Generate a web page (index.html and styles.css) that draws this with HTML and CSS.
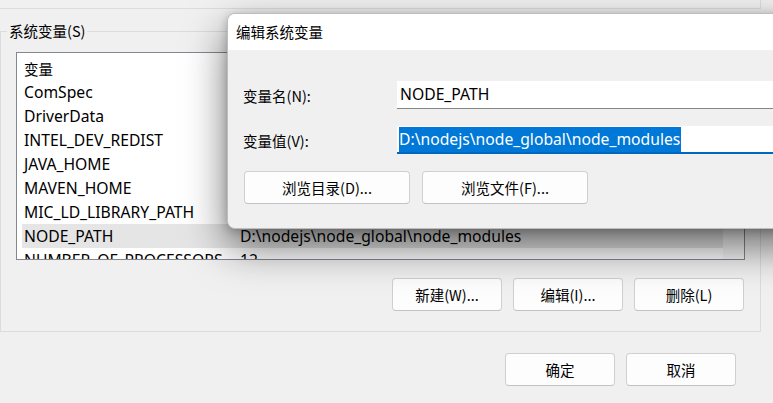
FILE: index.html
```html
<!DOCTYPE html>
<html lang="zh-CN">
<head>
<meta charset="utf-8">
<title>环境变量</title>
<link rel="stylesheet" href="styles.css">
</head>
<body>
<div class="window">
  <div class="user-group"></div>

  <fieldset class="group">
    <legend>系统变量(S)</legend>
    <div class="list">
      <div class="rows">
        <div class="row head"><span class="c1">变量</span><span class="c2">值</span></div>
        <div class="row"><span class="c1">ComSpec</span><span class="c2">C:\Windows\system32\cmd.exe</span></div>
        <div class="row"><span class="c1">DriverData</span><span class="c2">C:\Windows\System32\Drivers\DriverData</span></div>
        <div class="row"><span class="c1">INTEL_DEV_REDIST</span><span class="c2">C:\Program Files (x86)\Common Files\Intel\Shared Libraries\</span></div>
        <div class="row"><span class="c1">JAVA_HOME</span><span class="c2">C:\Program Files\Java\jdk1.8.0</span></div>
        <div class="row"><span class="c1">MAVEN_HOME</span><span class="c2">D:\maven</span></div>
        <div class="row"><span class="c1">MIC_LD_LIBRARY_PATH</span><span class="c2">%INTEL_DEV_REDIST%compiler\lib\mic</span></div>
        <div class="row sel"><span class="c1">NODE_PATH</span><span class="c2">D:\nodejs\node_global\node_modules</span></div>
        <div class="row"><span class="c1">NUMBER_OF_PROCESSORS</span><span class="c2">12</span></div>
      </div>
      <div class="scroll"></div>
    </div>
    <div class="btns">
      <button class="btn">新建(W)...</button>
      <button class="btn">编辑(I)...</button>
      <button class="btn">删除(L)</button>
    </div>
  </fieldset>

  <div class="footer">
    <button class="btn">确定</button>
    <button class="btn">取消</button>
  </div>

  <div class="dialog">
    <div class="title">编辑系统变量</div>
    <div class="body">
      <div class="field">
        <label class="lbl">变量名(N):</label>
        <div class="input">NODE_PATH</div>
      </div>
      <div class="field">
        <label class="lbl">变量值(V):</label>
        <div class="input focus"><span class="selected">D:\nodejs\node_global\node_modules</span></div>
      </div>
      <div class="dbtns">
        <button class="btn wide">浏览目录(D)...</button>
        <button class="btn wide">浏览文件(F)...</button>
      </div>
    </div>
  </div>
</div>
</body>
</html>
```

FILE: styles.css
```css
* { box-sizing: border-box; }

html, body {
  margin: 0;
  padding: 0;
  background: #f0f0f0;
  overflow: hidden;
}

body {
  width: 773px;
  height: 403px;
  font-family: "Noto Sans", "Noto Sans CJK SC", sans-serif;
  font-size: 15.7px;
  color: #000;
}

.window {
  position: relative;
  width: 773px;
  height: 403px;
}

.user-group {
  width: 761px;
  height: 9px;
  border-right: 1px solid #dcdcdc;
  border-bottom: 1px solid #dcdcdc;
}

.group {
  margin: 12px 0 0 0;
  width: 761px;
  height: 311px;
  border: 1px solid #dcdcdc;
  padding: 11px 15px 0 15px;
}

.group legend {
  margin-left: -9px;
  padding: 0 2px;
  line-height: 20px;
  font-family: "Noto Sans CJK SC", sans-serif;
  font-size: 14.5px;
}

.list {
  height: 208px;
  width: 729px;
  border: 1px solid #828790;
  background: #fff;
  display: flex;
  overflow: hidden;
}

.rows {
  flex: 1;
  padding: 3px 0 0 5px;
}

.row {
  height: 24px;
  display: flex;
  align-items: center;
  white-space: nowrap;
  overflow: hidden;
}

.row.sel { background: #e5e5e5; }

.row .c1 {
  width: 217px;
  padding-left: 2px;
  flex: none;
}

.row .c2 { padding-left: 1px; }

.row.head .c1 { font-family: "Noto Sans CJK SC", sans-serif; font-size: 14.5px; }

.scroll {
  width: 21px;
  flex: none;
  background: #f7f7f7;
}

.btn {
  font-family: "Noto Sans CJK SC", sans-serif;
  font-size: 14.5px;
  width: 110px;
  height: 33px;
  background: #fdfdfd;
  border: 1px solid #d0d0d0;
  border-bottom-color: #c2c2c2;
  border-radius: 4px;
  padding: 0;
  color: #000;
}

.btns {
  display: flex;
  justify-content: flex-end;
  gap: 11px;
  margin-top: 18px;
  padding-right: 1px;
}

.footer {
  display: flex;
  justify-content: flex-end;
  gap: 11px;
  margin-top: 21px;
  padding-right: 37px;
}

.dialog {
  position: absolute;
  left: 227px;
  top: 13px;
  width: 620px;
  height: 216px;
  border-radius: 8px;
  border: 1px solid #bdbdbd;
  background: #f0f0f0;
  overflow: hidden;
  box-shadow: 0 18px 42px rgba(0, 0, 0, 0.55), 0 2px 10px rgba(0, 0, 0, 0.22);
}

.title {
  height: 36px;
  background: #fff;
  padding-left: 8px;
  line-height: 36px;
  font-family: "Noto Sans CJK SC", sans-serif;
  font-size: 14.5px;
}

.body {
  padding: 31px 0 0 15px;
}

.field {
  display: flex;
  align-items: center;
  height: 28px;
  margin-bottom: 17px;
}

.lbl {
  width: 154px;
  font-family: "Noto Sans CJK SC", sans-serif;
  font-size: 14.5px;
}

.input {
  flex: 1;
  height: 28px;
  background: #fff;
  border-bottom: 1px solid #868686;
  padding: 0 0 0 3px;
  line-height: 27px;
  white-space: nowrap;
}

.input.focus {
  border-bottom: 2px solid #0067c0;
  line-height: 26px;
  padding-left: 2px;
}

.selected {
  background: #0078d7;
  color: #fff;
  padding: 1px 1px 2px 0;
}

.dbtns {
  display: flex;
  gap: 12px;
  margin-top: 9px;
  padding-left: 1px;
}

.btn.wide { width: 166px; }
```
